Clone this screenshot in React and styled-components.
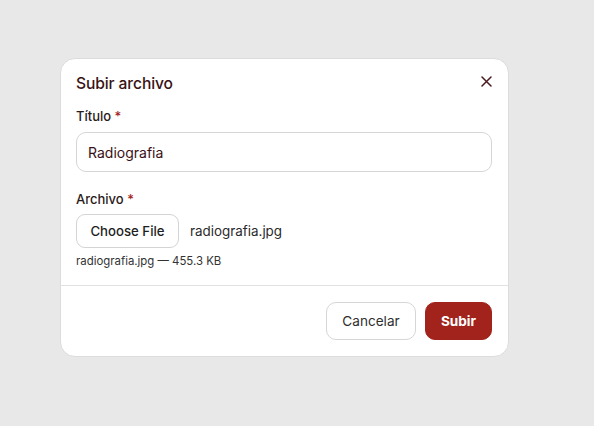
import React from "react";
import styled, { createGlobalStyle } from "styled-components";

const Global = createGlobalStyle`
  html, body { margin: 0; padding: 0; background: #e8e8e8; }
  body { font-family: Inter, "Noto Sans", "Liberation Sans", sans-serif; }
  * { box-sizing: border-box; }
`;

const Page = styled.div`
  padding: 58px 0 0 60px;
  min-height: 426px;
`;

const Card = styled.div`
  width: 449px;
  background: #fff;
  border: 1px solid #dcdcdc;
  border-radius: 15px;
  overflow: hidden;
`;

const Body = styled.div`
  padding: 12px 16px 17px 15px;
`;

const Header = styled.div`
  display: flex;
  align-items: center;
  justify-content: space-between;
  height: 24px;
`;

const Title = styled.h2`
  margin: 0;
  font-size: 15.6px;
  font-weight: 500;
  color: #3a1215;
  letter-spacing: -0.1px;
`;

const Close = styled.button`
  border: 0;
  background: transparent;
  padding: 0;
  width: 20px;
  height: 20px;
  display: flex;
  align-items: center;
  justify-content: center;
  margin-right: -4px;
  margin-top: -3px;
  cursor: pointer;
`;

const Field = styled.div`
  margin-top: ${(p) => p.$mt}px;
  display: flex;
  flex-direction: column;
`;

const Label = styled.label`
  font-size: 13px;
  font-weight: 500;
  color: #2b1a1a;
  line-height: 16px;
  margin-bottom: ${(p) => p.$mb}px;
`;

const Req = styled.span`
  color: #a3221b;
`;

const Input = styled.input`
  height: 40px;
  border: 1px solid #d6d6d6;
  border-radius: 10px;
  padding: 0 11px;
  font-family: inherit;
  font-size: 14px;
  color: #3a1215;
  outline: none;
`;

const FileRow = styled.div`
  display: flex;
  align-items: center;
  gap: 11px;
`;

const FileButton = styled.button`
  height: 34px;
  width: 103px;
  padding: 0;
  border: 1px solid #d4d4d4;
  border-radius: 9px;
  background: #fff;
  font-family: inherit;
  font-size: 13.2px;
  font-weight: 500;
  color: #1e1e1e;
`;

const FileName = styled.span`
  font-size: 13.4px;
  color: #2a2a2a;
`;

const Hint = styled.div`
  margin-top: 6px;
  font-size: 11.4px;
  color: #333;
  line-height: 14px;
`;

const Divider = styled.div`
  height: 1px;
  background: #e2e2e2;
`;

const Footer = styled.div`
  display: flex;
  justify-content: flex-end;
  gap: 9px;
  padding: 16px 16px 16px;
`;

const Btn = styled.button`
  height: 38px;
  width: ${(p) => (p.$primary ? 67 : 90)}px;
  padding: 0;
  border-radius: 10px;
  font-family: inherit;
  font-size: 13.6px;
  font-weight: ${(p) => (p.$primary ? 700 : 400)};
  border: 1px solid ${(p) => (p.$primary ? "#a1231b" : "#d6d6d6")};
  background: ${(p) => (p.$primary ? "#a1231b" : "#fff")};
  color: ${(p) => (p.$primary ? "#fff" : "#2e2e2e")};
`;

export default function App() {
  return (
    <>
      <Global />
      <Page>
        <Card>
          <Body>
            <Header>
              <Title>Subir archivo</Title>
              <Close aria-label="Cerrar">
                <svg width="11" height="11" viewBox="0 0 11 11">
                  <path d="M1 1L10 10M10 1L1 10" stroke="#4a1a1e" strokeWidth="1.5" strokeLinecap="round" />
                </svg>
              </Close>
            </Header>
            <Field $mt={13}>
              <Label $mb={8}>
                Título <Req>*</Req>
              </Label>
              <Input defaultValue="Radiografia" />
            </Field>
            <Field $mt={19}>
              <Label $mb={7}>
                Archivo <Req>*</Req>
              </Label>
              <FileRow>
                <FileButton>Choose File</FileButton>
                <FileName>radiografia.jpg</FileName>
              </FileRow>
              <Hint>radiografia.jpg — 455.3 KB</Hint>
            </Field>
          </Body>
          <Divider />
          <Footer>
            <Btn>Cancelar</Btn>
            <Btn $primary>Subir</Btn>
          </Footer>
        </Card>
      </Page>
    </>
  );
}
